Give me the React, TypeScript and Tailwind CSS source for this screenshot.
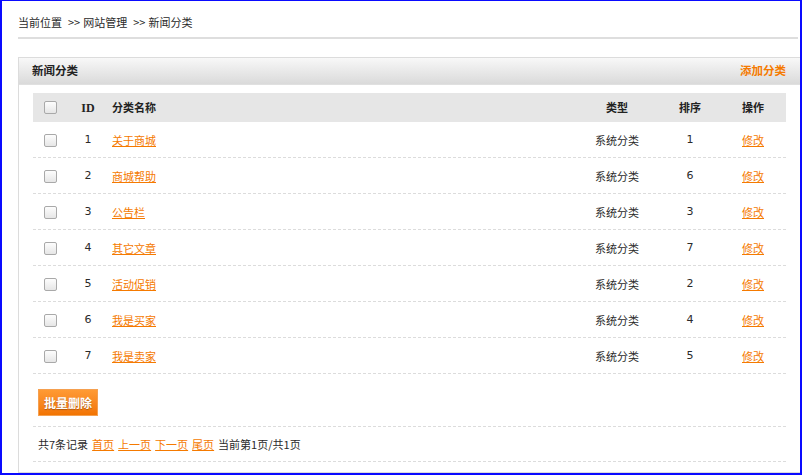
const rows = [
  { id: 1, name: "关于商城", type: "系统分类", sort: 1 },
  { id: 2, name: "商城帮助", type: "系统分类", sort: 6 },
  { id: 3, name: "公告栏", type: "系统分类", sort: 3 },
  { id: 4, name: "其它文章", type: "系统分类", sort: 7 },
  { id: 5, name: "活动促销", type: "系统分类", sort: 2 },
  { id: 6, name: "我是买家", type: "系统分类", sort: 4 },
  { id: 7, name: "我是卖家", type: "系统分类", sort: 5 },
];

const Check = () => (
  <span className="inline-block w-[13px] h-[13px] border border-[#a9a9a9] rounded-[2px] bg-gradient-to-b from-[#fdfdfd] to-[#e6e6e6]" />
);

const App = () => {
  return (
    <div
      className="w-[802px] h-[475px] bg-white border-l-2 border-r-2 border-t border-b-2 border-[#0a0aff] text-[11px] text-[#2a2a2a] overflow-hidden flex flex-col"
      style={{ fontFamily: '"Noto Sans CJK SC", "DejaVu Sans", sans-serif' }}
    >
      {/* breadcrumb */}
      <div className="ml-[16px] mr-[2px] pt-[13px] pb-[7px] border-b-2 border-[#dedede] leading-[16px] flex items-center">
        <span>当前位置</span>
        <span className="ml-[6px] mr-[3px]">&gt;&gt;</span>
        <span>网站管理</span>
        <span className="ml-[6px] mr-[3px]">&gt;&gt;</span>
        <span>新闻分类</span>
      </div>

      {/* panel */}
      <div className="ml-[16px] mt-[18px] flex-1 border border-[#dcdcdc] border-r-0 flex flex-col">
        <div className="h-[27px] flex items-center justify-between pl-[13px] pr-[14px] bg-gradient-to-b from-[#f8f8f8] to-[#dadada] border-b border-[#e0e0e0]">
          <span className="font-bold text-[#222] text-[11.5px]">新闻分类</span>
          <a className="font-bold text-[#f57a00] text-[11.5px] cursor-pointer">添加分类</a>
        </div>

        <div className="px-[14px] pt-[8px]">
          <div className="flex items-center h-[29px] bg-[#e6e6e6] font-bold text-[#222]">
            <div className="w-[34px] flex justify-center"><Check /></div>
            <div className="w-[42px] text-center text-[12px]" style={{ fontFamily: '"Liberation Serif", serif' }}>ID</div>
            <div className="flex-1 pl-[3px]">分类名称</div>
            <div className="w-[86px] text-center">类型</div>
            <div className="w-[60px] text-center">排序</div>
            <div className="w-[66px] text-center">操作</div>
          </div>

          {rows.map((r) => (
            <div key={r.id} className="flex items-center h-[36px] pt-[2px] border-b border-dashed border-[#dcdcdc]">
              <div className="w-[34px] flex justify-center"><Check /></div>
              <div className="w-[42px] text-center" style={{ fontFamily: '"DejaVu Sans", sans-serif' }}>{r.id}</div>
              <div className="flex-1 pl-[3px]">
                <a className="text-[#f57a00] underline cursor-pointer">{r.name}</a>
              </div>
              <div className="w-[86px] text-center">{r.type}</div>
              <div className="w-[60px] text-center" style={{ fontFamily: '"DejaVu Sans", sans-serif' }}>{r.sort}</div>
              <div className="w-[66px] text-center">
                <a className="text-[#f57a00] underline cursor-pointer">修改</a>
              </div>
            </div>
          ))}

          <div className="pt-[15px] pb-[10px] pl-[5px] border-b border-dashed border-[#dcdcdc]">
            <button className="w-[60px] h-[27px] bg-gradient-to-b from-[#ff9a33] to-[#f27400] border border-[#f5a050] text-white font-bold text-[12px] [text-shadow:0_1px_1px_rgba(0,0,0,0.3)]">
              批量删除
            </button>
          </div>

          <div className="h-[35px] pl-[5px] flex items-center gap-[4px] border-b border-dashed border-[#dcdcdc]">
            <span>共7条记录</span>
            <a className="text-[#f57a00] underline cursor-pointer">首页</a>
            <a className="text-[#f57a00] underline cursor-pointer">上一页</a>
            <a className="text-[#f57a00] underline cursor-pointer">下一页</a>
            <a className="text-[#f57a00] underline cursor-pointer">尾页</a>
            <span>当前第1页/共1页</span>
          </div>
        </div>
      </div>
    </div>
  );
};

export default App;
